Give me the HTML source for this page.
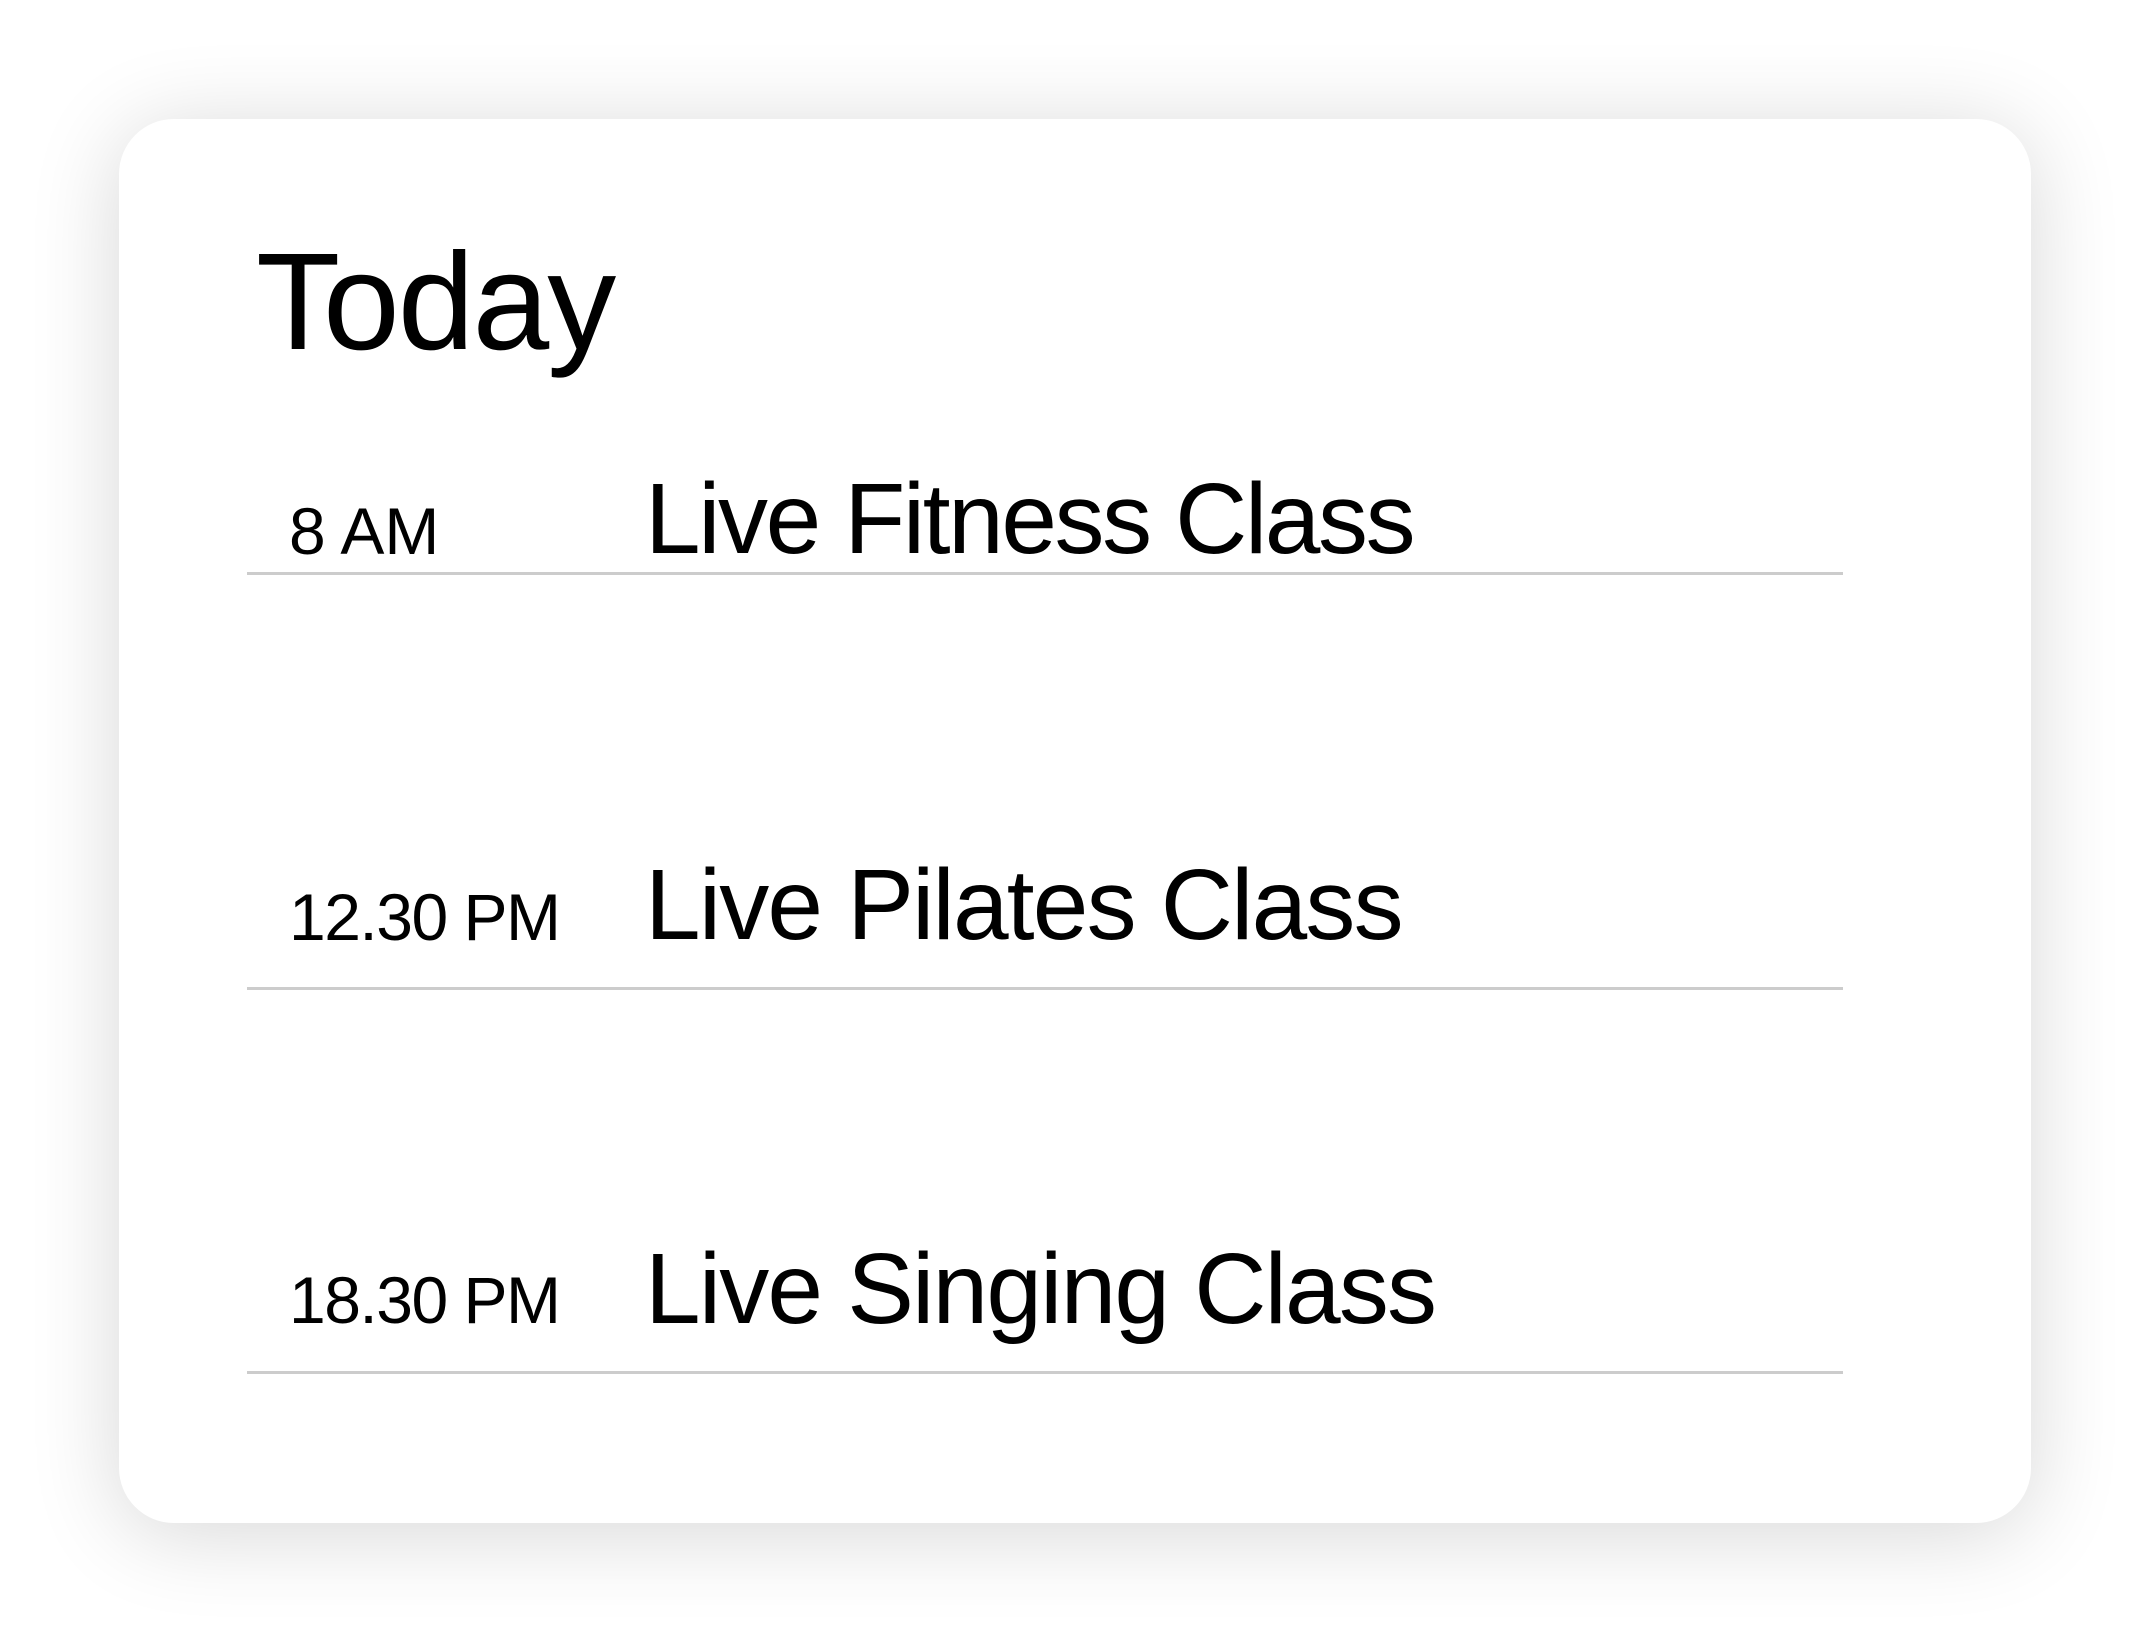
<!DOCTYPE html>
<html><head><meta charset="utf-8"><style>
html,body{margin:0;padding:0;background:#fff;width:2152px;height:1644px;overflow:hidden;font-family:"Liberation Sans",sans-serif;color:#000}
.card{position:absolute;left:119px;top:119px;width:1912px;height:1404px;background:#fff;border-radius:55px;box-shadow:0 10px 90px rgba(0,0,0,0.16)}
.t{position:absolute;line-height:normal;white-space:nowrap}
.h{font-size:138px;left:256px;top:223px;letter-spacing:-2px}
.tm{font-size:66px;left:289px;letter-spacing:-1.5px}
.ti{font-size:100px;left:645px;letter-spacing:-1.8px}
.ln{position:absolute;left:247px;width:1596px;height:3px;background:#cccccc}
</style></head><body>
<div class="card"></div>
<div class="t h">Today</div>
<div class="t tm" style="top:493px;letter-spacing:0">8 AM</div>
<div class="t ti" style="top:462px;letter-spacing:-2.4px">Live Fitness Class</div>
<div class="ln" style="top:572px"></div>
<div class="t tm" style="top:879px">12.30 PM</div>
<div class="t ti" style="top:848px">Live Pilates Class</div>
<div class="ln" style="top:987px"></div>
<div class="t tm" style="top:1262px">18.30 PM</div>
<div class="t ti" style="top:1232px">Live Singing Class</div>
<div class="ln" style="top:1371px"></div>
</body></html>
